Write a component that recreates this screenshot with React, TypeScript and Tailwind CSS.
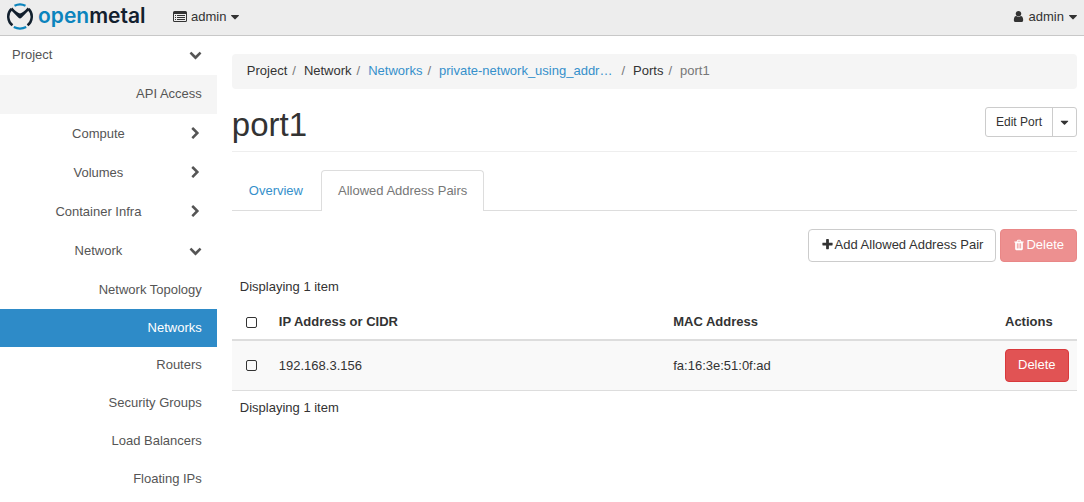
import React from "react";

type IconProps = { d: string; className: string };

function Icon({ d, className }: IconProps) {
  return (
    <svg viewBox="0 0 1792 1792" fill="currentColor" aria-hidden="true" className={className}>
      <path fillRule="evenodd" d={d} />
    </svg>
  );
}

const icons = {
  caret: "M1408 704q0 26-19 45l-448 448q-19 19-45 19t-45-19l-448-448q-19-19-19-45t19-45 45-19h896q26 0 45 19t19 45z",
  user: "M1536 1399q0 109-62.5 187t-150.5 78h-854q-88 0-150.5-78t-62.5-187q0-85 8.5-160.5t31.5-152 58.5-131 94-89 134.5-34.5q131 128 313 128t313-128q76 0 134.5 34.5t94 89 58.5 131 31.5 152 8.5 160.5zm-256-887q0 159-112.5 271.5t-271.5 112.5-271.5-112.5-112.5-271.5 112.5-271.5 271.5-112.5 271.5 112.5 112.5 271.5z",
  down: "M1683 808l-742 741q-19 19-45 19t-45-19l-742-741q-19-19-19-45.5t19-45.5l166-165q19-19 45-19t45 19l531 531 531-531q19-19 45-19t45 19l166 165q19 19 19 45.5t-19 45.5z",
  right: "M1363 877l-742 742q-19 19-45 19t-45-19l-166-166q-19-19-19-45t19-45l531-531-531-531q-19-19-19-45t19-45l166-166q19-19 45-19t45 19l742 742q19 19 19 45t-19 45z",
  plus: "M1600 736v192q0 40-28 68t-68 28h-416v416q0 40-28 68t-68 28h-192q-40 0-68-28t-28-68v-416h-416q-40 0-68-28t-28-68v-192q0-40 28-68t68-28h416v-416q0-40 28-68t68-28h192q40 0 68 28t28 68v416h416q40 0 68 28t28 68z",
  trash: "M704 1376v-704q0-32-32-32h-64q-32 0-32 32v704q0 32 32 32h64q32 0 32-32zm256 0v-704q0-32-32-32h-64q-32 0-32 32v704q0 32 32 32h64q32 0 32-32zm256 0v-704q0-32-32-32h-64q-32 0-32 32v704q0 32 32 32h64q32 0 32-32zm-544-992h448l-48-117q-7-9-17-11h-317q-10 2-17 11zm928 32v64q0 32-32 32h-96v948q0 83-47 143.500t-113 60.500h-832q-66 0-113-58.500t-47-141.500v-952h-96q-32 0-32-32v-64q0-32 32-32h309l70-167q15-37 54-63t79-26h320q40 0 79 26t54 63l70 167h309q32 0 32 32z",
};

function ListIcon() {
  return (
    <svg viewBox="0 0 14 12" fill="currentColor" aria-hidden="true" className="h-3 w-3.5">
      <path
        fillRule="evenodd"
        d="M1.500 0H12.500Q14 0 14 1.500V9.500Q14 11 12.500 11H1.500Q0 11 0 9.500V1.500Q0 0 1.500 0ZM1 3V9.500Q1 10 1.500 10H12.500Q13 10 13 9.500V3Z"
      />
      <path d="M2 4H3V5H2ZM4 4H12V5H4ZM2 6H3V7H2ZM4 6H12V7H4ZM2 8H3V9H2ZM4 8H12V9H4Z" />
    </svg>
  );
}

function Logo() {
  return (
    <a href="#home" className="flex w-[141px] items-center gap-[5px] font-[Inter,sans-serif] text-[21px] leading-6 font-semibold text-[#12202e]">
      <svg viewBox="0 0 26 27" fill="none" aria-hidden="true" className="h-[27px] w-[26px] shrink-0">
        <path d="M7.500 2.800Q13 0 18.500 2.800M6.800 24Q13 27.200 19.200 24" stroke="#0b84bd" strokeWidth="2.200" />
        <path
          d="M5.500 22.300C0.300 18.500 -0.200 10.500 4.400 6M20.500 22.300C25.700 18.500 26.200 10.500 21.600 6"
          stroke="#12202e"
          strokeWidth="2.500"
        />
        <path d="M3.400 6.500L5.300 4.600Q9.500 9.800 13 10.500Q16.500 9.800 20.700 4.600L22.600 6.500L14.500 14.800Q13 16.200 11.500 14.800Z" fill="#12202e" />
      </svg>
      <span className="pb-0.5"><span className="text-[#0b84bd]">open</span>metal</span>
    </a>
  );
}

const groups = [
  { label: "Compute", open: false },
  { label: "Volumes", open: false },
  { label: "Container Infra", open: false },
  { label: "Network", open: true },
];
const pages = ["Routers", "Security Groups", "Load Balancers", "Floating IPs"];

const leaf = "flex items-center justify-end px-[15px]";
const button = "flex items-center rounded-[4px] border text-[13px] leading-[18px]";
const link = "text-[#3590cb]";

function Sidebar() {
  return (
    <nav aria-label="Main" className="w-1/5 shrink-0 text-[#555]">
      <button type="button" className="flex h-[39px] w-full items-center justify-between pr-[15px] pb-0.5 pl-3">
        Project
        <Icon d={icons.down} className="size-[13px]" />
      </button>
      <a href="#api" className={`${leaf} h-[39px] bg-[#f5f5f5] pb-0.5`}>API Access</a>
      {groups.map((g) => (
        <button key={g.label} type="button" aria-expanded={g.open} className="flex h-[39px] w-full items-center pr-[15px] pl-2">
          <span className="flex-1 text-center">{g.label}</span>
          <Icon d={g.open ? icons.down : icons.right} className="size-[13px]" />
        </button>
      ))}
      <a href="#topology" className={`${leaf} h-[39px]`}>Network Topology</a>
      <a href="#networks" aria-current="page" className={`${leaf} h-[38px] bg-[#2e8bc8] text-white`}>Networks</a>
      <div className="-mt-px">
        {pages.map((p) => (
          <a key={p} href="#page" className={`${leaf} h-[38px]`}>{p}</a>
        ))}
      </div>
    </nav>
  );
}

function Slash() {
  return <span className="pr-2 pl-[5px] text-[#777]">/</span>;
}

function Check({ label }: { label: string }) {
  return (
    <input
      type="checkbox"
      aria-label={label}
      className="mx-1.5 block size-[11px] appearance-none rounded-[2px] border border-[#333] checked:bg-[#333]"
    />
  );
}

export default function App() {
  return (
    <div className="min-h-screen bg-white font-['Liberation_Sans',Arial,sans-serif] text-[13px] leading-[18px] text-[#333]">
      <header className="flex h-9 items-center justify-between border-b border-[#c8c8c8] bg-[#ededed] pr-1 pl-[7px] pb-0.5">
        <div className="flex items-center gap-[25px]">
          <Logo />
          <button type="button" className="flex items-center gap-1">
            <ListIcon />
            <span>admin</span>
            <Icon d={icons.caret} className="-ml-0.5 size-[14px]" />
          </button>
        </div>
        <button type="button" className="flex items-center gap-1">
          <Icon d={icons.user} className="size-[13px]" />
          <span>admin</span>
          <Icon d={icons.caret} className="-ml-0.5 size-[14px]" />
        </button>
      </header>
      <div className="flex">
        <Sidebar />
        <main className="min-w-0 flex-1 pt-[18px] pr-[7px] pl-[15px]">
          <nav aria-label="Breadcrumb" className="flex h-[35px] items-center rounded-[4px] bg-[#f5f5f5] px-[15px] pb-0.5">
            Project<Slash />Network<Slash />
            <a href="#networks" className={link}>Networks</a><Slash />
            <a href="#network" className={`${link} mr-1`}>private-network_using_addr…</a><Slash />
            Ports<Slash /><span className="text-[#777]">port1</span>
          </nav>
          <div className="flex h-[63px] items-center justify-between border-b border-[#eee] pt-1">
            <h1 className="pt-1.5 text-[33px] leading-9">port1</h1>
            <div className="flex h-[30px] rounded-[3px] border border-[#ccc] text-xs">
              <button type="button" className="px-[10px]">Edit Port</button>
              <button type="button" aria-label="More actions" className="border-l border-[#ccc] px-[5px]">
                <Icon d={icons.caret} className="size-[13px]" />
              </button>
            </div>
          </div>
          <div role="tablist" className="mt-[18px] flex gap-px border-b border-[#ddd]">
            <button type="button" role="tab" aria-selected="false" className={`${link} h-10 border border-transparent border-b-0 px-4`}>Overview</button>
            <button type="button" role="tab" aria-selected="true" className="-mb-px h-[41px] rounded-t-[4px] border border-b-0 border-[#ddd] bg-white px-4 text-[#777]">
              Allowed Address Pairs
            </button>
          </div>
          <div className="mt-[18px] flex justify-end gap-1">
            <button type="button" className={`${button} h-[33px] gap-px border-[#ccc] bg-white px-3 pb-0.5`}>
              <Icon d={icons.plus} className="size-[13px]" />
              Add Allowed Address Pair
            </button>
            <button type="button" disabled className={`${button} h-[33px] gap-px border-[#e98787] bg-[#ed9090] px-3 pb-0.5 text-white`}>
              <Icon d={icons.trash} className="size-[12px]" />
              Delete
            </button>
          </div>
          <p className="px-2 pt-4 pb-[9px]">Displaying 1 item</p>
          <table className="w-full table-fixed border-collapse text-left">
            <thead>
              <tr className="border-b-2 border-[#ddd]">
                <th className="w-[39px] p-2"><Check label="Select all" /></th>
                <th className="w-7/15 p-2">IP Address or CIDR</th>
                <th className="p-2">MAC Address</th>
                <th className="w-20 p-2">Actions</th>
              </tr>
            </thead>
            <tbody>
              <tr className="border-b border-[#ddd] bg-[#f9f9f9]">
                <td className="p-2"><Check label="Select 192.168.3.156" /></td>
                <td className="p-2">192.168.3.156</td>
                <td className="p-2">fa:16:3e:51:0f:ad</td>
                <td className="p-2">
                  <button type="button" className={`${button} h-[33px] border-[#d9393c] bg-[#e15354] px-3 pb-0.5 text-white`}>Delete</button>
                </td>
              </tr>
            </tbody>
          </table>
          <p className="p-2">Displaying 1 item</p>
        </main>
      </div>
    </div>
  );
}
